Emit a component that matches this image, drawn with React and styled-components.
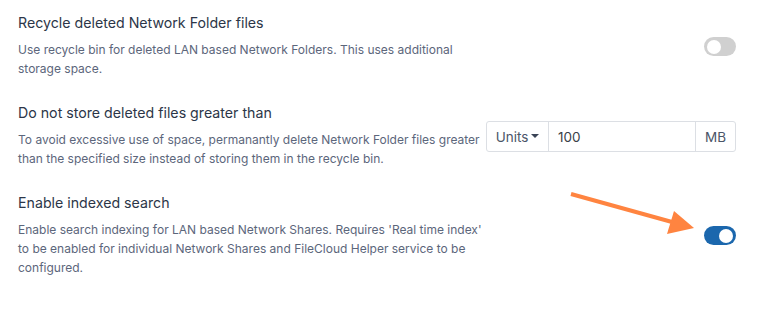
import React from "react";
import styled, { createGlobalStyle } from "styled-components";

const Global = createGlobalStyle`
  html, body { margin: 0; padding: 0; background: #fff; }
  body { font-family: Inter, "Noto Sans", sans-serif; }
`;

const Page = styled.div`
  position: relative;
  width: 770px;
  height: 309px;
  padding: 13px 34px 0 18px;
  box-sizing: border-box;
  display: flex;
  flex-direction: column;
  gap: 25px;
`;

const Row = styled.div`
  display: grid;
  grid-template-columns: 1fr 250px;
  align-items: center;
`;

const Info = styled.div`
  display: flex;
  flex-direction: column;
  gap: 7px;
  min-width: 0;
`;

const Title = styled.div`
  font-size: 14.2px;
  line-height: 20px;
  color: #2c3648;
  white-space: nowrap;
`;

const Desc = styled.div`
  font-size: 12px;
  line-height: 19px;
  color: #5c667b;
  white-space: nowrap;
`;

const Control = styled.div`
  display: flex;
  justify-content: flex-end;
  margin-top: ${(p) => p.$offset || 0}px;
`;

const Switch = styled.div`
  width: 32px;
  height: 19px;
  border-radius: 10px;
  background: ${(p) => (p.$on ? "#1b67ad" : "#d0d0d0")};
  position: relative;
  &::after {
    content: "";
    position: absolute;
    top: 2.5px;
    left: ${(p) => (p.$on ? "15px" : "3px")};
    width: 14px;
    height: 14px;
    border-radius: 50%;
    background: #fff;
  }
`;

const Group = styled.div`
  display: flex;
  width: 250px;
  height: 31px;
  border: 1px solid #dcdfe4;
  border-radius: 3px;
  box-sizing: border-box;
  font-size: 13.5px;
`;

const Units = styled.div`
  width: 61px;
  display: flex;
  align-items: center;
  justify-content: center;
  gap: 3px;
  color: #4b5568;
  border-right: 1px solid #dcdfe4;
`;

const Caret = styled.span`
  width: 0;
  height: 0;
  border-left: 4px solid transparent;
  border-right: 4px solid transparent;
  border-top: 4px solid #3a4456;
  margin-top: -1px;
`;

const Field = styled.div`
  flex: 1;
  display: flex;
  align-items: center;
  padding-left: 9px;
  color: #3a3f48;
`;

const Addon = styled.div`
  width: 39px;
  display: flex;
  align-items: center;
  justify-content: center;
  color: #4b5568;
  border-left: 1px solid #dcdfe4;
`;

const Arrow = styled.svg`
  position: absolute;
  left: 0;
  top: 0;
  pointer-events: none;
`;

export default function App() {
  return (
    <>
      <Global />
      <Page>
        <Row>
          <Info>
            <Title>Recycle deleted Network Folder files</Title>
            <Desc>
              Use recycle bin for deleted LAN based Network Folders. This uses additional
              <br />
              storage space.
            </Desc>
          </Info>
          <Control $offset={2}>
            <Switch />
          </Control>
        </Row>
        <Row>
          <Info>
            <Title>Do not store deleted files greater than</Title>
            <Desc>
              To avoid excessive use of space, permanantly delete Network Folder files greater
              <br />
              than the specified size instead of storing them in the recycle bin.
            </Desc>
          </Info>
          <Control $offset={2}>
            <Group>
              <Units>
                Units<Caret />
              </Units>
              <Field>100</Field>
              <Addon>MB</Addon>
            </Group>
          </Control>
        </Row>
        <Row>
          <Info>
            <Title>Enable indexed search</Title>
            <Desc>
              Enable search indexing for LAN based Network Shares. Requires 'Real time index'
              <br />
              to be enabled for individual Network Shares and FileCloud Helper service to be
              <br />
              configured.
            </Desc>
          </Info>
          <Control $offset={1}>
            <Switch $on />
          </Control>
        </Row>
        <Arrow width="770" height="309" viewBox="0 0 770 309">
          <line x1="571" y1="194" x2="672" y2="222" stroke="#ff8440" strokeWidth="4" strokeLinecap="butt" />
          <polygon points="694,228 667,234 674,211" fill="#ff8440" />
        </Arrow>
      </Page>
    </>
  );
}
